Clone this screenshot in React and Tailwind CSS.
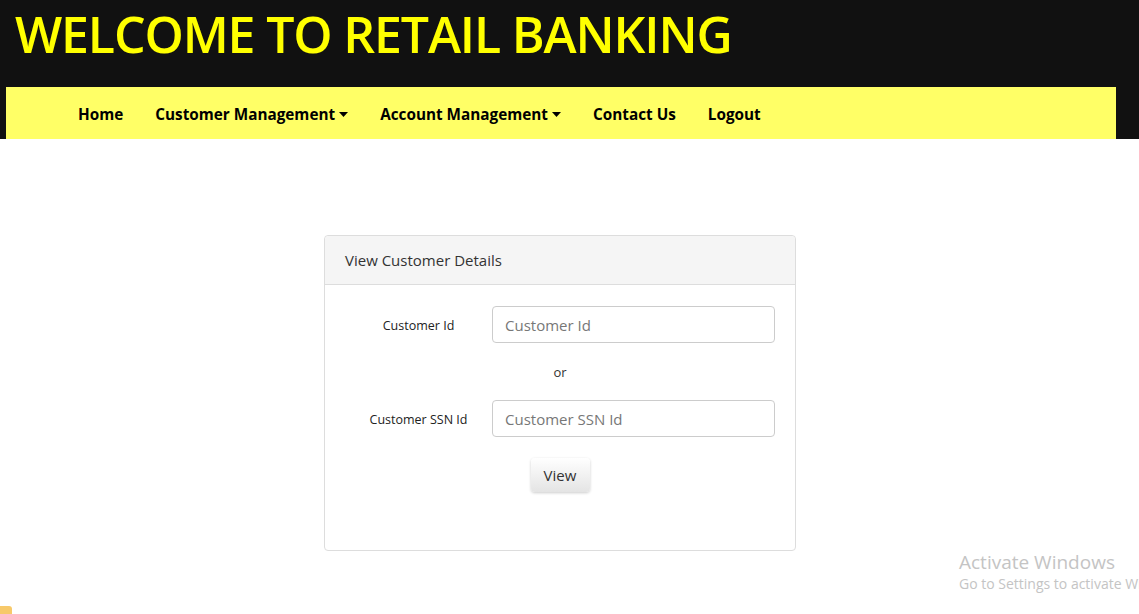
export default function App() {
  const navItems = [
    { label: 'Home' },
    { label: 'Customer Management', caret: true },
    { label: 'Account Management', caret: true },
    { label: 'Contact Us' },
    { label: 'Logout' }
  ];

  return (
    <div
      className="relative min-h-[614px] bg-white overflow-hidden"
      style={{ fontFamily: '"Open Sans", "Noto Sans", sans-serif' }}
    >
      <header className="bg-[#111111] pb-0">
        <h1 className="text-[#ffff00] font-semibold text-[50px] leading-[58px] pl-[15px] pt-[5px] h-[87px] tracking-[-1.15px]">
          WELCOME TO RETAIL BANKING
        </h1>
        <nav className="ml-[6px] mr-[23px] h-[52px] pt-[2px] bg-[#ffff66] flex items-center pl-[56px]">
          {navItems.map(({ label, caret }) => (
            <a
              key={label}
              className="px-[16px] text-[15.3px] font-bold text-black flex items-center gap-[4px]"
            >
              <span>{label}</span>
              {caret && (
                <svg width="9" height="5" viewBox="0 0 9 5">
                  <path d="M0 0h9L4.5 5z" fill="#000" />
                </svg>
              )}
            </a>
          ))}
        </nav>
      </header>

      <main className="pt-[96px]">
        <div className="ml-[324px] w-[472px] h-[316px] border border-[#dddddd] rounded-[4px] flex flex-col">
          <div className="h-[49px] bg-[#f5f5f5] border-b border-[#dddddd] rounded-t-[4px] flex items-center px-[20px] text-[15px] text-[#333333]">
            View Customer Details
          </div>
          <div className="px-[20px] pt-[21px] flex flex-col">
            <div className="flex items-center">
              <label className="w-[147px] pt-[3px] text-center text-[12.5px] text-[#222]">Customer Id</label>
              <input
                placeholder="Customer Id"
                className="w-[283px] h-[37px] border border-[#cccccc] rounded-[4px] px-[12px] text-[15px] placeholder:text-[#777777] outline-none"
              />
            </div>
            <div className="h-[57px] pt-[2px] flex items-center justify-center text-[13px] text-[#333]">or</div>
            <div className="flex items-center">
              <label className="w-[147px] pt-[3px] text-center text-[12.5px] text-[#222]">Customer SSN Id</label>
              <input
                placeholder="Customer SSN Id"
                className="w-[283px] h-[37px] border border-[#cccccc] rounded-[4px] px-[12px] text-[15px] placeholder:text-[#777777] outline-none"
              />
            </div>
            <div className="flex justify-center pt-[21px]">
              <button className="w-[59px] h-[34px] rounded-[4px] bg-gradient-to-b from-white to-[#e4e4e4] shadow-[0_1px_3px_rgba(0,0,0,0.2)] text-[15px] text-[#333]">
                View
              </button>
            </div>
          </div>
        </div>
      </main>

      <div className="absolute left-[959px] top-[550px] text-[#c4c4c4] whitespace-nowrap">
        <div className="text-[19px] leading-[24px]">Activate Windows</div>
        <div className="text-[14px] leading-[20px]">Go to Settings to activate Windows.</div>
      </div>

      <div className="absolute left-0 top-[606px] w-[12px] h-[10px] rounded-tr-[3px] bg-[#f7c96a]" />
    </div>
  );
}
